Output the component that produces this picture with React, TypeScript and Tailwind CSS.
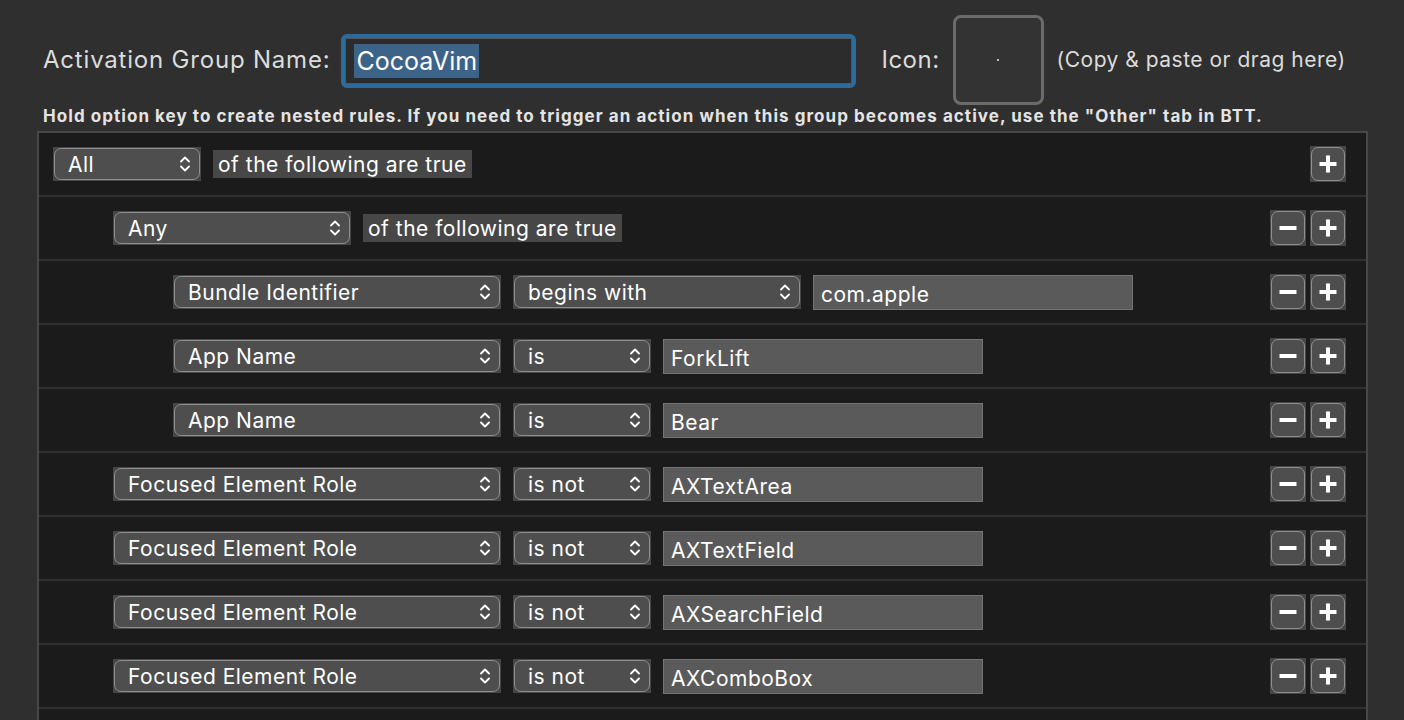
import React from "react";

const font = { fontFamily: "Inter, 'Noto Sans', 'Liberation Sans', sans-serif" };

function Chevrons() {
  return (
    <svg width="12" height="18" viewBox="0 0 12 18" fill="none" stroke="white" strokeWidth="1.8" strokeLinecap="round" strokeLinejoin="round">
      <path d="M2 6.5 L6 2.5 L10 6.5" />
      <path d="M2 11.5 L6 15.5 L10 11.5" />
    </svg>
  );
}

function Popup({ label, w }: { label: string; w: string }) {
  return (
    <div className={`${w} h-[34px] bg-[#464646] p-[1px] shrink-0`}>
      <div className="h-full w-full rounded-[7px] border-[1.5px] border-[#8f8f8f] bg-[#4e4e4e] flex items-center justify-between pl-[13px] pr-[8px]">
        <span className="text-[21px] text-white leading-none tracking-[0.5px]">{label}</span>
        <Chevrons />
      </div>
    </div>
  );
}

function Field({ value, w }: { value: string; w: string }) {
  return (
    <div className={`${w} h-[35px] bg-[#5a5a5a] border border-[#747474] flex items-center pl-[7px] pt-[5px] shrink-0`}>
      <span className="text-[21px] text-white leading-none tracking-[0.5px]">{value}</span>
    </div>
  );
}

function Btn({ kind }: { kind: "plus" | "minus" }) {
  return (
    <div className="w-[36px] h-[36px] bg-[#464646] p-[1px]">
      <div className="h-full w-full rounded-[7px] border-[1.5px] border-[#8f8f8f] bg-[#4e4e4e] flex items-center justify-center">
        <svg width="18" height="18" viewBox="0 0 18 18" fill="white">
          <rect x="0.5" y="7" width="17" height="4" />
          {kind === "plus" && <rect x="7" y="0.5" width="4" height="17" />}
        </svg>
      </div>
    </div>
  );
}

function Row({ indent, children, minus = true, last = false }: { indent: string; children: React.ReactNode; minus?: boolean; last?: boolean }) {
  return (
    <div className={`h-[64px] flex items-center ${last ? "" : "border-b-2 border-[#303030]"} ${indent} pr-[20px]`}>
      <div className="flex items-center gap-[12px] flex-1">{children}</div>
      <div className="flex items-center gap-[4px]">
        {minus && <Btn kind="minus" />}
        <Btn kind="plus" />
      </div>
    </div>
  );
}

function Label({ text }: { text: string }) {
  return (
    <div className="h-[28px] bg-[#474747] px-[5px] flex items-center">
      <span className="text-[21px] text-white leading-none tracking-[0.5px]">{text}</span>
    </div>
  );
}

export default function App() {
  return (
    <div className="w-[1404px] h-[720px] overflow-hidden bg-[#2f2f2f] text-[#e2e2e2]" style={font}>
      <div className="flex items-center h-[90px] mt-[15px] pl-[43px]">
        <span className="text-[24px] text-[#dcdcdc] tracking-[0.8px]">Activation Group Name:</span>
        <div className="ml-[11px] w-[515px] h-[54px] rounded-[6px] border-[4px] border-[#2c6c9c] mt-[2px]">
          <div className="h-full w-full border border-[#555] bg-[#2c2c2c] flex items-center pl-[8px]">
            <span className="bg-[#3e6389] text-white text-[25px] leading-[34px] h-[34px] px-[2px]">CocoaVim</span>
          </div>
        </div>
        <span className="ml-[25px] text-[24px] text-[#dcdcdc] tracking-[0.5px]">Icon:</span>
        <div className="ml-[13px] w-[91px] h-[90px] rounded-[8px] border-[3px] border-[#6b6b6b] bg-[#333333] flex items-center justify-center">
          <div className="w-[2px] h-[2px] bg-[#bbbbbb]" />
        </div>
        <span className="ml-[13px] text-[21px] text-[#dcdcdc] tracking-[0.5px]">(Copy &amp; paste or drag here)</span>
      </div>
      <div className="pl-[43px] mt-[1px] text-[17px] font-bold text-[#e4e4e4] leading-[20px] tracking-[1.05px] whitespace-nowrap">
        Hold option key to create nested rules. If you need to trigger an action when this group becomes active, use the "Other" tab in BTT.
      </div>
      <div className="ml-[37px] mt-[5px] w-[1331px] h-[600px] border-2 border-[#484848] bg-[#1b1b1b]">
        <Row indent="pl-[14px]" minus={false}>
          <Popup label="All" w="w-[148px]" />
          <Label text="of the following are true" />
        </Row>
        <Row indent="pl-[74px]">
          <Popup label="Any" w="w-[238px]" />
          <Label text="of the following are true" />
        </Row>
        <Row indent="pl-[134px]">
          <Popup label="Bundle Identifier" w="w-[328px]" />
          <Popup label="begins with" w="w-[288px]" />
          <Field value="com.apple" w="w-[320px]" />
        </Row>
        <Row indent="pl-[134px]">
          <Popup label="App Name" w="w-[328px]" />
          <Popup label="is" w="w-[138px]" />
          <Field value="ForkLift" w="w-[320px]" />
        </Row>
        <Row indent="pl-[134px]">
          <Popup label="App Name" w="w-[328px]" />
          <Popup label="is" w="w-[138px]" />
          <Field value="Bear" w="w-[320px]" />
        </Row>
        <Row indent="pl-[74px]">
          <Popup label="Focused Element Role" w="w-[388px]" />
          <Popup label="is not" w="w-[138px]" />
          <Field value="AXTextArea" w="w-[320px]" />
        </Row>
        <Row indent="pl-[74px]">
          <Popup label="Focused Element Role" w="w-[388px]" />
          <Popup label="is not" w="w-[138px]" />
          <Field value="AXTextField" w="w-[320px]" />
        </Row>
        <Row indent="pl-[74px]">
          <Popup label="Focused Element Role" w="w-[388px]" />
          <Popup label="is not" w="w-[138px]" />
          <Field value="AXSearchField" w="w-[320px]" />
        </Row>
        <Row indent="pl-[74px]">
          <Popup label="Focused Element Role" w="w-[388px]" />
          <Popup label="is not" w="w-[138px]" />
          <Field value="AXComboBox" w="w-[320px]" />
        </Row>
      </div>
    </div>
  );
}
